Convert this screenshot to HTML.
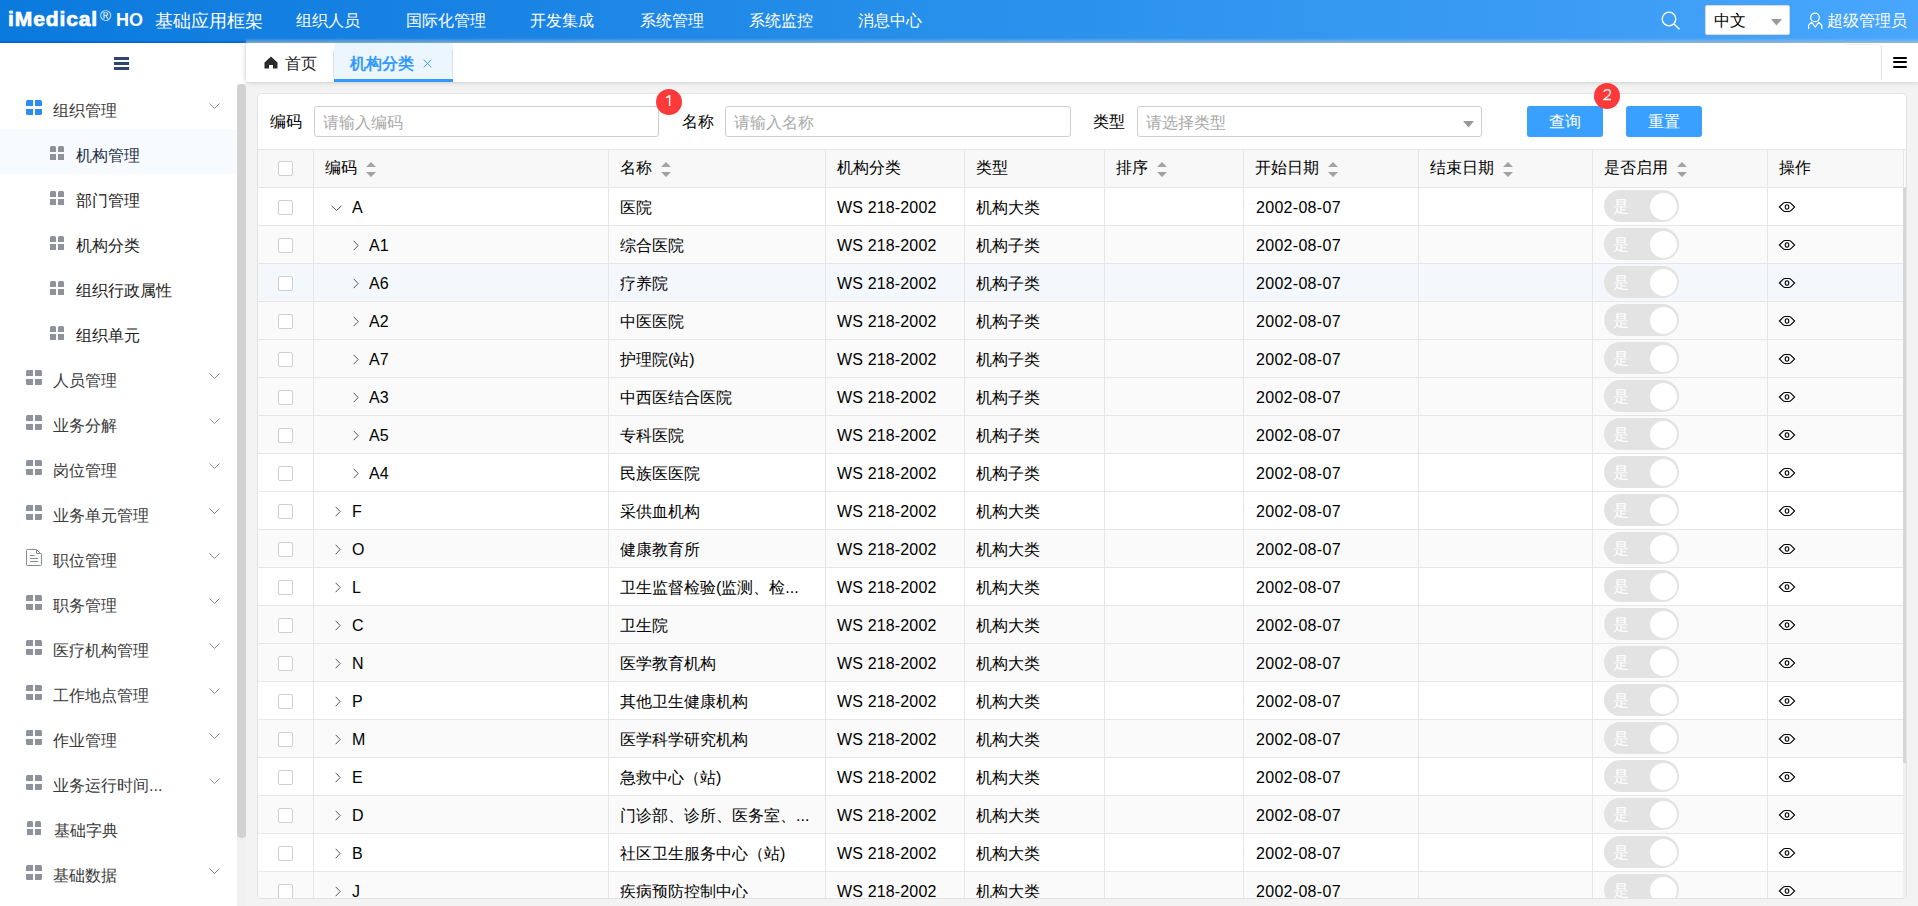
<!DOCTYPE html><html><head><meta charset="utf-8"><style>
*{box-sizing:border-box;margin:0;padding:0}
html,body{width:1918px;height:906px;overflow:hidden}
body{font-family:"Liberation Sans",sans-serif;font-size:16px;color:#000;background:#f3f3f3;position:relative}
.abs{position:absolute}
#hdr{left:0;top:0;width:1918px;height:43px;background:linear-gradient(90deg,#0b7add 0%,#1983e5 25%,#2790ea 49.5%,#3c9cf5 82%,#48a7fd 100%);z-index:5}
#hdr:before{content:'';position:absolute;left:246px;right:0;bottom:0;height:5px;background:linear-gradient(180deg,rgba(225,225,225,0),rgba(225,225,225,.42))}
#hdr:after{content:'';position:absolute;left:0;width:246px;bottom:0;height:2px;background:rgba(0,70,190,.35)}
#hdr .t{position:absolute;color:#fff;white-space:nowrap;line-height:20px}
#side{left:0;top:43px;width:246px;height:863px;background:#fff;z-index:3}
.mi{position:absolute;left:0;width:237px;height:45px}
.mi .tx{position:absolute;top:0;line-height:45px;color:#3a3a3a;white-space:nowrap;padding-top:4px}
.ic4{position:absolute;width:16px;height:15px}
.ic4 i{position:absolute;width:7px;height:6px;border-radius:2px;background:#8a8e99}
.chev{position:absolute;left:209px;width:10px;height:6px}
#tabs{left:246px;top:43px;width:1672px;height:39px;background:#fff;z-index:6;box-shadow:0 0 5px rgba(170,170,170,.7);border-top-left-radius:3px}
#card{left:257px;top:93px;width:1650px;height:806px;background:#fff;border:1px solid #e3e3e3;border-radius:4px;overflow:hidden}
.lbl{position:absolute;line-height:20px;white-space:nowrap;color:#000}
.inp{position:absolute;height:31px;border:1px solid #cfcfcf;border-radius:3px;background:#fff}
.inp span{position:absolute;left:8px;top:6px;line-height:20px;color:#a9a9a9;white-space:nowrap}
.btn{position:absolute;height:31px;width:76px;background:#3aa0ff;border-radius:3px;color:#fff;text-align:center;line-height:31px}
.badge{position:absolute;width:26px;height:26px;border-radius:13px;background:#fc3a3a;color:#fff;font-size:15px;text-align:center;line-height:26px}
.row{position:absolute;left:0;width:1645px;height:38px;border-bottom:1px solid #e6e6e6;overflow:hidden}
.cell{position:absolute;top:1px;height:36px;line-height:37px;white-space:nowrap;overflow:hidden}
.vl{position:absolute;width:1px;background:#e6e6e6}
.cb{position:absolute;left:20px;top:11px;width:15px;height:15px;border:1px solid #cfcfcf;border-radius:2px;background:#fff}
.sw{position:absolute;width:75px;height:32px;border-radius:16px;background:#e3e3e3}
.sw b{position:absolute;right:2px;top:2.5px;width:27px;height:27px;border-radius:14px;background:#fff}
.sw span{position:absolute;left:9px;top:1px;line-height:32px;color:#fff;font-size:16px}
.sort{position:absolute;width:10px;height:15px}
</style></head><body><div id="hdr" class="abs"><div class="t" style="left:8px;top:9px;font-size:21px;font-weight:bold;letter-spacing:0.9px;-webkit-text-stroke:0.7px #fff">iMedical</div><div class="t" style="left:100px;top:6px;font-size:15px">&#174;</div><div class="t" style="left:116px;top:10px;font-size:18px;font-weight:bold">HO</div><div class="t" style="left:155px;top:11px;font-size:18px">基础应用框架</div><div class="t" style="left:296px;top:11px;font-size:16px">组织人员</div><div class="t" style="left:406px;top:11px;font-size:16px">国际化管理</div><div class="t" style="left:530px;top:11px;font-size:16px">开发集成</div><div class="t" style="left:640px;top:11px;font-size:16px">系统管理</div><div class="t" style="left:749px;top:11px;font-size:16px">系统监控</div><div class="t" style="left:858px;top:11px;font-size:16px">消息中心</div><svg class="abs" style="left:1661px;top:11px" width="20" height="19" viewBox="0 0 20 19"><circle cx="8" cy="8" r="6.8" fill="none" stroke="#fff" stroke-width="1.3"/><path d="M13 13 L18.5 18.2" stroke="#fff" stroke-width="1.4"/></svg><div class="abs" style="left:1705px;top:5px;width:85px;height:30px;background:#fff;border-radius:2px;border:1px solid #d9d9d9"><span style="position:absolute;left:8px;top:5px;line-height:20px;color:#000">中文</span><svg style="position:absolute;left:65px;top:13px" width="11" height="7" viewBox="0 0 11 7"><path d="M0 0 L11 0 L5.5 6.5 Z" fill="#999"/></svg></div><svg class="abs" style="left:1807px;top:12px" width="17" height="18" viewBox="0 0 17 18"><circle cx="8" cy="5.4" r="4.3" fill="none" stroke="#fff" stroke-width="1.2"/><path d="M1.6 17 V13.2 L4.6 10.2 L8.4 15 L11.6 10.2 L14.8 13.2 V17" fill="none" stroke="#fff" stroke-width="1.2"/></svg><div class="t" style="left:1827px;top:11px;font-size:16px">超级管理员</div></div><div id="side" class="abs"><div class="abs" style="left:114px;top:14px;width:15px;height:3px;background:#2f4570"></div><div class="abs" style="left:114px;top:19px;width:15px;height:3px;background:#2f4570"></div><div class="abs" style="left:114px;top:24px;width:15px;height:3px;background:#2f4570"></div><div class="abs" style="left:237px;top:41px;width:9px;height:822px;background:#f1f1f1"></div><div class="abs" style="left:237px;top:41px;width:9px;height:754px;background:#d2d2d2;border-radius:4px"></div><div class="mi" style="top:41px;"><div class="ic4" style="left:26px;top:16px;width:16px;height:15px"><i style="left:0px;top:0px;width:7px;height:6px;background:#2d8cf0;border-radius:1.5px 0 0 0"></i><i style="left:9px;top:0px;width:7px;height:6px;background:#2d8cf0;border-radius:0 1.5px 0 0"></i><i style="left:0px;top:9px;width:7px;height:6px;background:#2d8cf0;border-radius:0 0 0 1.5px"></i><i style="left:9px;top:9px;width:7px;height:6px;background:#2d8cf0;border-radius:0 0 1.5px 0"></i></div><div class="tx" style="left:53px">组织管理</div><svg class="abs" style="left:208.5px;top:18.5px" width="11" height="7" viewBox="0 0 11 7"><path d="M0.5 0.5 L5.5 5.5 L10.5 0.5" fill="none" stroke="#8a8a8a" stroke-width="1"/></svg></div><div class="mi" style="top:86px;background:#f7fbfe;"><div class="ic4" style="left:50px;top:17px;width:14px;height:14px"><i style="left:0px;top:0px;width:6px;height:6px;background:#8e929b;border-radius:1.5px 1.5px 0 0"></i><i style="left:8px;top:0px;width:6px;height:6px;background:#8e929b;border-radius:1.5px 1.5px 0 0"></i><i style="left:0px;top:8px;width:6px;height:6px;background:#8e929b;border-radius:0"></i><i style="left:8px;top:8px;width:6px;height:6px;background:#8e929b;border-radius:0"></i></div><div class="tx" style="left:76px;color:#1c2b44">机构管理</div></div><div class="mi" style="top:131px;"><div class="ic4" style="left:50px;top:17px;width:14px;height:14px"><i style="left:0px;top:0px;width:6px;height:6px;background:#8e929b;border-radius:1.5px 1.5px 0 0"></i><i style="left:8px;top:0px;width:6px;height:6px;background:#8e929b;border-radius:1.5px 1.5px 0 0"></i><i style="left:0px;top:8px;width:6px;height:6px;background:#8e929b;border-radius:0"></i><i style="left:8px;top:8px;width:6px;height:6px;background:#8e929b;border-radius:0"></i></div><div class="tx" style="left:76px;color:#222">部门管理</div></div><div class="mi" style="top:176px;"><div class="ic4" style="left:50px;top:17px;width:14px;height:14px"><i style="left:0px;top:0px;width:6px;height:6px;background:#8e929b;border-radius:1.5px 1.5px 0 0"></i><i style="left:8px;top:0px;width:6px;height:6px;background:#8e929b;border-radius:1.5px 1.5px 0 0"></i><i style="left:0px;top:8px;width:6px;height:6px;background:#8e929b;border-radius:0"></i><i style="left:8px;top:8px;width:6px;height:6px;background:#8e929b;border-radius:0"></i></div><div class="tx" style="left:76px;color:#222">机构分类</div></div><div class="mi" style="top:221px;"><div class="ic4" style="left:50px;top:17px;width:14px;height:14px"><i style="left:0px;top:0px;width:6px;height:6px;background:#8e929b;border-radius:1.5px 1.5px 0 0"></i><i style="left:8px;top:0px;width:6px;height:6px;background:#8e929b;border-radius:1.5px 1.5px 0 0"></i><i style="left:0px;top:8px;width:6px;height:6px;background:#8e929b;border-radius:0"></i><i style="left:8px;top:8px;width:6px;height:6px;background:#8e929b;border-radius:0"></i></div><div class="tx" style="left:76px;color:#222">组织行政属性</div></div><div class="mi" style="top:266px;"><div class="ic4" style="left:50px;top:17px;width:14px;height:14px"><i style="left:0px;top:0px;width:6px;height:6px;background:#8e929b;border-radius:1.5px 1.5px 0 0"></i><i style="left:8px;top:0px;width:6px;height:6px;background:#8e929b;border-radius:1.5px 1.5px 0 0"></i><i style="left:0px;top:8px;width:6px;height:6px;background:#8e929b;border-radius:0"></i><i style="left:8px;top:8px;width:6px;height:6px;background:#8e929b;border-radius:0"></i></div><div class="tx" style="left:76px;color:#222">组织单元</div></div><div class="mi" style="top:311px;"><div class="ic4" style="left:26px;top:16px;width:16px;height:15px"><i style="left:0px;top:0px;width:7px;height:6px;background:#8e929b;border-radius:1.5px 0 0 0"></i><i style="left:9px;top:0px;width:7px;height:6px;background:#8e929b;border-radius:0 1.5px 0 0"></i><i style="left:0px;top:9px;width:7px;height:6px;background:#8e929b;border-radius:0 0 0 1.5px"></i><i style="left:9px;top:9px;width:7px;height:6px;background:#8e929b;border-radius:0 0 1.5px 0"></i></div><div class="tx" style="left:53px">人员管理</div><svg class="abs" style="left:208.5px;top:18.5px" width="11" height="7" viewBox="0 0 11 7"><path d="M0.5 0.5 L5.5 5.5 L10.5 0.5" fill="none" stroke="#8a8a8a" stroke-width="1"/></svg></div><div class="mi" style="top:356px;"><div class="ic4" style="left:26px;top:16px;width:16px;height:15px"><i style="left:0px;top:0px;width:7px;height:6px;background:#8e929b;border-radius:1.5px 0 0 0"></i><i style="left:9px;top:0px;width:7px;height:6px;background:#8e929b;border-radius:0 1.5px 0 0"></i><i style="left:0px;top:9px;width:7px;height:6px;background:#8e929b;border-radius:0 0 0 1.5px"></i><i style="left:9px;top:9px;width:7px;height:6px;background:#8e929b;border-radius:0 0 1.5px 0"></i></div><div class="tx" style="left:53px">业务分解</div><svg class="abs" style="left:208.5px;top:18.5px" width="11" height="7" viewBox="0 0 11 7"><path d="M0.5 0.5 L5.5 5.5 L10.5 0.5" fill="none" stroke="#8a8a8a" stroke-width="1"/></svg></div><div class="mi" style="top:401px;"><div class="ic4" style="left:26px;top:16px;width:16px;height:15px"><i style="left:0px;top:0px;width:7px;height:6px;background:#8e929b;border-radius:1.5px 0 0 0"></i><i style="left:9px;top:0px;width:7px;height:6px;background:#8e929b;border-radius:0 1.5px 0 0"></i><i style="left:0px;top:9px;width:7px;height:6px;background:#8e929b;border-radius:0 0 0 1.5px"></i><i style="left:9px;top:9px;width:7px;height:6px;background:#8e929b;border-radius:0 0 1.5px 0"></i></div><div class="tx" style="left:53px">岗位管理</div><svg class="abs" style="left:208.5px;top:18.5px" width="11" height="7" viewBox="0 0 11 7"><path d="M0.5 0.5 L5.5 5.5 L10.5 0.5" fill="none" stroke="#8a8a8a" stroke-width="1"/></svg></div><div class="mi" style="top:446px;"><div class="ic4" style="left:26px;top:16px;width:16px;height:15px"><i style="left:0px;top:0px;width:7px;height:6px;background:#8e929b;border-radius:1.5px 0 0 0"></i><i style="left:9px;top:0px;width:7px;height:6px;background:#8e929b;border-radius:0 1.5px 0 0"></i><i style="left:0px;top:9px;width:7px;height:6px;background:#8e929b;border-radius:0 0 0 1.5px"></i><i style="left:9px;top:9px;width:7px;height:6px;background:#8e929b;border-radius:0 0 1.5px 0"></i></div><div class="tx" style="left:53px">业务单元管理</div><svg class="abs" style="left:208.5px;top:18.5px" width="11" height="7" viewBox="0 0 11 7"><path d="M0.5 0.5 L5.5 5.5 L10.5 0.5" fill="none" stroke="#8a8a8a" stroke-width="1"/></svg></div><div class="mi" style="top:491px;"><svg class="abs" style="left:26px;top:15px" width="17" height="18" viewBox="0 0 17 18"><path d="M0.5 1.5 Q0.5 0.5 1.5 0.5 H10.5 L15.5 5.5 V15.5 Q15.5 16.5 14.5 16.5 H1.5 Q0.5 16.5 0.5 15.5 Z M10.5 0.5 V4.5 H15.5 M4 6.5 H8.5 M4 9.5 H12 M4 12.5 H12" fill="none" stroke="#868a92" stroke-width="1"/></svg><div class="tx" style="left:53px">职位管理</div><svg class="abs" style="left:208.5px;top:18.5px" width="11" height="7" viewBox="0 0 11 7"><path d="M0.5 0.5 L5.5 5.5 L10.5 0.5" fill="none" stroke="#8a8a8a" stroke-width="1"/></svg></div><div class="mi" style="top:536px;"><div class="ic4" style="left:26px;top:16px;width:16px;height:15px"><i style="left:0px;top:0px;width:7px;height:6px;background:#8e929b;border-radius:1.5px 0 0 0"></i><i style="left:9px;top:0px;width:7px;height:6px;background:#8e929b;border-radius:0 1.5px 0 0"></i><i style="left:0px;top:9px;width:7px;height:6px;background:#8e929b;border-radius:0 0 0 1.5px"></i><i style="left:9px;top:9px;width:7px;height:6px;background:#8e929b;border-radius:0 0 1.5px 0"></i></div><div class="tx" style="left:53px">职务管理</div><svg class="abs" style="left:208.5px;top:18.5px" width="11" height="7" viewBox="0 0 11 7"><path d="M0.5 0.5 L5.5 5.5 L10.5 0.5" fill="none" stroke="#8a8a8a" stroke-width="1"/></svg></div><div class="mi" style="top:581px;"><div class="ic4" style="left:26px;top:16px;width:16px;height:15px"><i style="left:0px;top:0px;width:7px;height:6px;background:#8e929b;border-radius:1.5px 0 0 0"></i><i style="left:9px;top:0px;width:7px;height:6px;background:#8e929b;border-radius:0 1.5px 0 0"></i><i style="left:0px;top:9px;width:7px;height:6px;background:#8e929b;border-radius:0 0 0 1.5px"></i><i style="left:9px;top:9px;width:7px;height:6px;background:#8e929b;border-radius:0 0 1.5px 0"></i></div><div class="tx" style="left:53px">医疗机构管理</div><svg class="abs" style="left:208.5px;top:18.5px" width="11" height="7" viewBox="0 0 11 7"><path d="M0.5 0.5 L5.5 5.5 L10.5 0.5" fill="none" stroke="#8a8a8a" stroke-width="1"/></svg></div><div class="mi" style="top:626px;"><div class="ic4" style="left:26px;top:16px;width:16px;height:15px"><i style="left:0px;top:0px;width:7px;height:6px;background:#8e929b;border-radius:1.5px 0 0 0"></i><i style="left:9px;top:0px;width:7px;height:6px;background:#8e929b;border-radius:0 1.5px 0 0"></i><i style="left:0px;top:9px;width:7px;height:6px;background:#8e929b;border-radius:0 0 0 1.5px"></i><i style="left:9px;top:9px;width:7px;height:6px;background:#8e929b;border-radius:0 0 1.5px 0"></i></div><div class="tx" style="left:53px">工作地点管理</div><svg class="abs" style="left:208.5px;top:18.5px" width="11" height="7" viewBox="0 0 11 7"><path d="M0.5 0.5 L5.5 5.5 L10.5 0.5" fill="none" stroke="#8a8a8a" stroke-width="1"/></svg></div><div class="mi" style="top:671px;"><div class="ic4" style="left:26px;top:16px;width:16px;height:15px"><i style="left:0px;top:0px;width:7px;height:6px;background:#8e929b;border-radius:1.5px 0 0 0"></i><i style="left:9px;top:0px;width:7px;height:6px;background:#8e929b;border-radius:0 1.5px 0 0"></i><i style="left:0px;top:9px;width:7px;height:6px;background:#8e929b;border-radius:0 0 0 1.5px"></i><i style="left:9px;top:9px;width:7px;height:6px;background:#8e929b;border-radius:0 0 1.5px 0"></i></div><div class="tx" style="left:53px">作业管理</div><svg class="abs" style="left:208.5px;top:18.5px" width="11" height="7" viewBox="0 0 11 7"><path d="M0.5 0.5 L5.5 5.5 L10.5 0.5" fill="none" stroke="#8a8a8a" stroke-width="1"/></svg></div><div class="mi" style="top:716px;"><div class="ic4" style="left:26px;top:16px;width:16px;height:15px"><i style="left:0px;top:0px;width:7px;height:6px;background:#8e929b;border-radius:1.5px 0 0 0"></i><i style="left:9px;top:0px;width:7px;height:6px;background:#8e929b;border-radius:0 1.5px 0 0"></i><i style="left:0px;top:9px;width:7px;height:6px;background:#8e929b;border-radius:0 0 0 1.5px"></i><i style="left:9px;top:9px;width:7px;height:6px;background:#8e929b;border-radius:0 0 1.5px 0"></i></div><div class="tx" style="left:53px">业务运行时间...</div><svg class="abs" style="left:208.5px;top:18.5px" width="11" height="7" viewBox="0 0 11 7"><path d="M0.5 0.5 L5.5 5.5 L10.5 0.5" fill="none" stroke="#8a8a8a" stroke-width="1"/></svg></div><div class="mi" style="top:761px;"><div class="ic4" style="left:27px;top:17px;width:14px;height:14px"><i style="left:0px;top:0px;width:6px;height:6px;background:#8e929b;border-radius:1.5px 1.5px 0 0"></i><i style="left:8px;top:0px;width:6px;height:6px;background:#8e929b;border-radius:1.5px 1.5px 0 0"></i><i style="left:0px;top:8px;width:6px;height:6px;background:#8e929b;border-radius:0"></i><i style="left:8px;top:8px;width:6px;height:6px;background:#8e929b;border-radius:0"></i></div><div class="tx" style="left:54px">基础字典</div></div><div class="mi" style="top:806px;"><div class="ic4" style="left:26px;top:16px;width:16px;height:15px"><i style="left:0px;top:0px;width:7px;height:6px;background:#8e929b;border-radius:1.5px 0 0 0"></i><i style="left:9px;top:0px;width:7px;height:6px;background:#8e929b;border-radius:0 1.5px 0 0"></i><i style="left:0px;top:9px;width:7px;height:6px;background:#8e929b;border-radius:0 0 0 1.5px"></i><i style="left:9px;top:9px;width:7px;height:6px;background:#8e929b;border-radius:0 0 1.5px 0"></i></div><div class="tx" style="left:53px">基础数据</div><svg class="abs" style="left:208.5px;top:18.5px" width="11" height="7" viewBox="0 0 11 7"><path d="M0.5 0.5 L5.5 5.5 L10.5 0.5" fill="none" stroke="#8a8a8a" stroke-width="1"/></svg></div></div><div id="tabs" class="abs"><svg class="abs" style="left:18px;top:13px" width="14" height="13" viewBox="0 0 14 13"><path d="M7 0.5 L13.5 6.5 V12.5 H9 V9 H5 V12.5 H0.5 V6.5 Z" fill="#2b2b2b"/></svg><div class="abs" style="left:39px;top:10.5px;line-height:20px;color:#222">首页</div><div class="abs" style="left:87px;top:7px;width:1px;height:27px;background:#e0e0e0"></div><div class="abs" style="left:88px;top:0;width:119px;height:39px;background:#ebf6ff;border-bottom:3px solid #3399ff"></div><div class="abs" style="left:104px;top:10.5px;line-height:20px;color:#3399ff;font-weight:bold">机构分类</div><svg class="abs" style="left:177px;top:16px" width="9" height="9" viewBox="0 0 9 9"><path d="M0.7 0.7 L8.3 8.3 M8.3 0.7 L0.7 8.3" stroke="#3399ff" stroke-width="0.95"/></svg><div class="abs" style="left:206px;top:7px;width:1px;height:27px;background:#e0e0e0"></div><div class="abs" style="left:1600px;top:1px;width:36px;height:36px;border-right:1px solid #e3e3e3;border-top:1px solid #f1eeeb;border-top-right-radius:4px"></div><div class="abs" style="left:1647px;top:14px;width:14px;height:2.4px;background:#000;border-radius:1px"></div><div class="abs" style="left:1647px;top:18px;width:14px;height:2.4px;background:#000;border-radius:1px"></div><div class="abs" style="left:1647px;top:23px;width:14px;height:2.4px;background:#000;border-radius:1px"></div></div><div id="card" class="abs"><div class="lbl" style="left:12px;top:18px">编码</div><div class="inp" style="left:56px;top:12px;width:345px"><span>请输入编码</span></div><div class="lbl" style="left:424px;top:18px">名称</div><div class="inp" style="left:467px;top:12px;width:346px"><span>请输入名称</span></div><div class="lbl" style="left:835px;top:18px">类型</div><div class="inp" style="left:879px;top:12px;width:345px"><span>请选择类型</span><svg style="position:absolute;left:325px;top:14px" width="11" height="7" viewBox="0 0 11 7"><path d="M0 0 L11 0 L5.5 6.5 Z" fill="#999"/></svg></div><div class="btn" style="left:1269px;top:12px">查询</div><div class="btn" style="left:1368px;top:12px">重置</div><div class="abs" style="left:0;top:55px;width:1648px;height:1px;background:#e6e6e6"></div><div class="abs" style="left:0;top:56px;width:1648px;height:38px;background:#f8f8f8;border-bottom:1px solid #e6e6e6"></div><div class="lbl" style="left:67px;top:64px">编码</div><svg class="abs" style="left:108px;top:68px" width="10" height="15" viewBox="0 0 10 15"><path d="M0 5 L5 0 L10 5 Z M0 10 L10 10 L5 15 Z" fill="#a3a3a3"/></svg><div class="lbl" style="left:362px;top:64px">名称</div><svg class="abs" style="left:403px;top:68px" width="10" height="15" viewBox="0 0 10 15"><path d="M0 5 L5 0 L10 5 Z M0 10 L10 10 L5 15 Z" fill="#a3a3a3"/></svg><div class="lbl" style="left:579px;top:64px">机构分类</div><div class="lbl" style="left:718px;top:64px">类型</div><div class="lbl" style="left:858px;top:64px">排序</div><svg class="abs" style="left:899px;top:68px" width="10" height="15" viewBox="0 0 10 15"><path d="M0 5 L5 0 L10 5 Z M0 10 L10 10 L5 15 Z" fill="#a3a3a3"/></svg><div class="lbl" style="left:997px;top:64px">开始日期</div><svg class="abs" style="left:1070px;top:68px" width="10" height="15" viewBox="0 0 10 15"><path d="M0 5 L5 0 L10 5 Z M0 10 L10 10 L5 15 Z" fill="#a3a3a3"/></svg><div class="lbl" style="left:1172px;top:64px">结束日期</div><svg class="abs" style="left:1245px;top:68px" width="10" height="15" viewBox="0 0 10 15"><path d="M0 5 L5 0 L10 5 Z M0 10 L10 10 L5 15 Z" fill="#a3a3a3"/></svg><div class="lbl" style="left:1346px;top:64px">是否启用</div><svg class="abs" style="left:1419px;top:68px" width="10" height="15" viewBox="0 0 10 15"><path d="M0 5 L5 0 L10 5 Z M0 10 L10 10 L5 15 Z" fill="#a3a3a3"/></svg><div class="lbl" style="left:1521px;top:64px">操作</div><div class="cb" style="left:20px;top:67px"></div><div class="row" style="top:94px;background:#fff"><div class="cb" style="left:20px;top:12px"></div><svg class="abs" style="left:73px;top:17px" width="11" height="7" viewBox="0 0 11 7"><path d="M0.5 0.8 L5.5 5.5 L10.5 0.8" fill="none" stroke="#555" stroke-width="1"/></svg><div class="cell" style="left:94px">A</div><div class="cell" style="left:362px">医院</div><div class="cell" style="left:579px;letter-spacing:0.15px">WS 218-2002</div><div class="cell" style="left:718px">机构大类</div><div class="cell" style="left:998px;letter-spacing:0.3px">2002-08-07</div><div class="sw" style="left:1346px;top:2px"><span>是</span><b></b></div><svg class="abs" style="left:1520px;top:13px" width="18" height="12" viewBox="0 0 18 12"><path d="M1.4 6 L4.8 2.6 Q5.9 1.5 7.4 1.5 H10.6 Q12.1 1.5 13.2 2.6 L16.6 6 L13.2 9.4 Q12.1 10.5 10.6 10.5 H7.4 Q5.9 10.5 4.8 9.4 Z" fill="none" stroke="#000" stroke-width="1.1"/><ellipse cx="9" cy="6" rx="1.8" ry="2.2" fill="none" stroke="#000" stroke-width="1.05"/></svg></div><div class="row" style="top:132px;background:#fafafa"><div class="cb" style="left:20px;top:12px"></div><svg class="abs" style="left:95px;top:14px" width="7" height="11" viewBox="0 0 7 11"><path d="M0.6 0.8 L5.2 5.5 L0.6 10.2" fill="none" stroke="#555" stroke-width="1"/></svg><div class="cell" style="left:111px">A1</div><div class="cell" style="left:362px">综合医院</div><div class="cell" style="left:579px;letter-spacing:0.15px">WS 218-2002</div><div class="cell" style="left:718px">机构子类</div><div class="cell" style="left:998px;letter-spacing:0.3px">2002-08-07</div><div class="sw" style="left:1346px;top:2px"><span>是</span><b></b></div><svg class="abs" style="left:1520px;top:13px" width="18" height="12" viewBox="0 0 18 12"><path d="M1.4 6 L4.8 2.6 Q5.9 1.5 7.4 1.5 H10.6 Q12.1 1.5 13.2 2.6 L16.6 6 L13.2 9.4 Q12.1 10.5 10.6 10.5 H7.4 Q5.9 10.5 4.8 9.4 Z" fill="none" stroke="#000" stroke-width="1.1"/><ellipse cx="9" cy="6" rx="1.8" ry="2.2" fill="none" stroke="#000" stroke-width="1.05"/></svg></div><div class="row" style="top:170px;background:#f4f8fc"><div class="cb" style="left:20px;top:12px"></div><svg class="abs" style="left:95px;top:14px" width="7" height="11" viewBox="0 0 7 11"><path d="M0.6 0.8 L5.2 5.5 L0.6 10.2" fill="none" stroke="#555" stroke-width="1"/></svg><div class="cell" style="left:111px">A6</div><div class="cell" style="left:362px">疗养院</div><div class="cell" style="left:579px;letter-spacing:0.15px">WS 218-2002</div><div class="cell" style="left:718px">机构子类</div><div class="cell" style="left:998px;letter-spacing:0.3px">2002-08-07</div><div class="sw" style="left:1346px;top:2px"><span>是</span><b></b></div><svg class="abs" style="left:1520px;top:13px" width="18" height="12" viewBox="0 0 18 12"><path d="M1.4 6 L4.8 2.6 Q5.9 1.5 7.4 1.5 H10.6 Q12.1 1.5 13.2 2.6 L16.6 6 L13.2 9.4 Q12.1 10.5 10.6 10.5 H7.4 Q5.9 10.5 4.8 9.4 Z" fill="none" stroke="#000" stroke-width="1.1"/><ellipse cx="9" cy="6" rx="1.8" ry="2.2" fill="none" stroke="#000" stroke-width="1.05"/></svg></div><div class="row" style="top:208px;background:#fafafa"><div class="cb" style="left:20px;top:12px"></div><svg class="abs" style="left:95px;top:14px" width="7" height="11" viewBox="0 0 7 11"><path d="M0.6 0.8 L5.2 5.5 L0.6 10.2" fill="none" stroke="#555" stroke-width="1"/></svg><div class="cell" style="left:111px">A2</div><div class="cell" style="left:362px">中医医院</div><div class="cell" style="left:579px;letter-spacing:0.15px">WS 218-2002</div><div class="cell" style="left:718px">机构子类</div><div class="cell" style="left:998px;letter-spacing:0.3px">2002-08-07</div><div class="sw" style="left:1346px;top:2px"><span>是</span><b></b></div><svg class="abs" style="left:1520px;top:13px" width="18" height="12" viewBox="0 0 18 12"><path d="M1.4 6 L4.8 2.6 Q5.9 1.5 7.4 1.5 H10.6 Q12.1 1.5 13.2 2.6 L16.6 6 L13.2 9.4 Q12.1 10.5 10.6 10.5 H7.4 Q5.9 10.5 4.8 9.4 Z" fill="none" stroke="#000" stroke-width="1.1"/><ellipse cx="9" cy="6" rx="1.8" ry="2.2" fill="none" stroke="#000" stroke-width="1.05"/></svg></div><div class="row" style="top:246px;background:#fafafa"><div class="cb" style="left:20px;top:12px"></div><svg class="abs" style="left:95px;top:14px" width="7" height="11" viewBox="0 0 7 11"><path d="M0.6 0.8 L5.2 5.5 L0.6 10.2" fill="none" stroke="#555" stroke-width="1"/></svg><div class="cell" style="left:111px">A7</div><div class="cell" style="left:362px">护理院(站)</div><div class="cell" style="left:579px;letter-spacing:0.15px">WS 218-2002</div><div class="cell" style="left:718px">机构子类</div><div class="cell" style="left:998px;letter-spacing:0.3px">2002-08-07</div><div class="sw" style="left:1346px;top:2px"><span>是</span><b></b></div><svg class="abs" style="left:1520px;top:13px" width="18" height="12" viewBox="0 0 18 12"><path d="M1.4 6 L4.8 2.6 Q5.9 1.5 7.4 1.5 H10.6 Q12.1 1.5 13.2 2.6 L16.6 6 L13.2 9.4 Q12.1 10.5 10.6 10.5 H7.4 Q5.9 10.5 4.8 9.4 Z" fill="none" stroke="#000" stroke-width="1.1"/><ellipse cx="9" cy="6" rx="1.8" ry="2.2" fill="none" stroke="#000" stroke-width="1.05"/></svg></div><div class="row" style="top:284px;background:#fafafa"><div class="cb" style="left:20px;top:12px"></div><svg class="abs" style="left:95px;top:14px" width="7" height="11" viewBox="0 0 7 11"><path d="M0.6 0.8 L5.2 5.5 L0.6 10.2" fill="none" stroke="#555" stroke-width="1"/></svg><div class="cell" style="left:111px">A3</div><div class="cell" style="left:362px">中西医结合医院</div><div class="cell" style="left:579px;letter-spacing:0.15px">WS 218-2002</div><div class="cell" style="left:718px">机构子类</div><div class="cell" style="left:998px;letter-spacing:0.3px">2002-08-07</div><div class="sw" style="left:1346px;top:2px"><span>是</span><b></b></div><svg class="abs" style="left:1520px;top:13px" width="18" height="12" viewBox="0 0 18 12"><path d="M1.4 6 L4.8 2.6 Q5.9 1.5 7.4 1.5 H10.6 Q12.1 1.5 13.2 2.6 L16.6 6 L13.2 9.4 Q12.1 10.5 10.6 10.5 H7.4 Q5.9 10.5 4.8 9.4 Z" fill="none" stroke="#000" stroke-width="1.1"/><ellipse cx="9" cy="6" rx="1.8" ry="2.2" fill="none" stroke="#000" stroke-width="1.05"/></svg></div><div class="row" style="top:322px;background:#fafafa"><div class="cb" style="left:20px;top:12px"></div><svg class="abs" style="left:95px;top:14px" width="7" height="11" viewBox="0 0 7 11"><path d="M0.6 0.8 L5.2 5.5 L0.6 10.2" fill="none" stroke="#555" stroke-width="1"/></svg><div class="cell" style="left:111px">A5</div><div class="cell" style="left:362px">专科医院</div><div class="cell" style="left:579px;letter-spacing:0.15px">WS 218-2002</div><div class="cell" style="left:718px">机构子类</div><div class="cell" style="left:998px;letter-spacing:0.3px">2002-08-07</div><div class="sw" style="left:1346px;top:2px"><span>是</span><b></b></div><svg class="abs" style="left:1520px;top:13px" width="18" height="12" viewBox="0 0 18 12"><path d="M1.4 6 L4.8 2.6 Q5.9 1.5 7.4 1.5 H10.6 Q12.1 1.5 13.2 2.6 L16.6 6 L13.2 9.4 Q12.1 10.5 10.6 10.5 H7.4 Q5.9 10.5 4.8 9.4 Z" fill="none" stroke="#000" stroke-width="1.1"/><ellipse cx="9" cy="6" rx="1.8" ry="2.2" fill="none" stroke="#000" stroke-width="1.05"/></svg></div><div class="row" style="top:360px;background:#fff"><div class="cb" style="left:20px;top:12px"></div><svg class="abs" style="left:95px;top:14px" width="7" height="11" viewBox="0 0 7 11"><path d="M0.6 0.8 L5.2 5.5 L0.6 10.2" fill="none" stroke="#555" stroke-width="1"/></svg><div class="cell" style="left:111px">A4</div><div class="cell" style="left:362px">民族医医院</div><div class="cell" style="left:579px;letter-spacing:0.15px">WS 218-2002</div><div class="cell" style="left:718px">机构子类</div><div class="cell" style="left:998px;letter-spacing:0.3px">2002-08-07</div><div class="sw" style="left:1346px;top:2px"><span>是</span><b></b></div><svg class="abs" style="left:1520px;top:13px" width="18" height="12" viewBox="0 0 18 12"><path d="M1.4 6 L4.8 2.6 Q5.9 1.5 7.4 1.5 H10.6 Q12.1 1.5 13.2 2.6 L16.6 6 L13.2 9.4 Q12.1 10.5 10.6 10.5 H7.4 Q5.9 10.5 4.8 9.4 Z" fill="none" stroke="#000" stroke-width="1.1"/><ellipse cx="9" cy="6" rx="1.8" ry="2.2" fill="none" stroke="#000" stroke-width="1.05"/></svg></div><div class="row" style="top:398px;background:#fff"><div class="cb" style="left:20px;top:12px"></div><svg class="abs" style="left:77px;top:14px" width="7" height="11" viewBox="0 0 7 11"><path d="M0.6 0.8 L5.2 5.5 L0.6 10.2" fill="none" stroke="#555" stroke-width="1"/></svg><div class="cell" style="left:94px">F</div><div class="cell" style="left:362px">采供血机构</div><div class="cell" style="left:579px;letter-spacing:0.15px">WS 218-2002</div><div class="cell" style="left:718px">机构大类</div><div class="cell" style="left:998px;letter-spacing:0.3px">2002-08-07</div><div class="sw" style="left:1346px;top:2px"><span>是</span><b></b></div><svg class="abs" style="left:1520px;top:13px" width="18" height="12" viewBox="0 0 18 12"><path d="M1.4 6 L4.8 2.6 Q5.9 1.5 7.4 1.5 H10.6 Q12.1 1.5 13.2 2.6 L16.6 6 L13.2 9.4 Q12.1 10.5 10.6 10.5 H7.4 Q5.9 10.5 4.8 9.4 Z" fill="none" stroke="#000" stroke-width="1.1"/><ellipse cx="9" cy="6" rx="1.8" ry="2.2" fill="none" stroke="#000" stroke-width="1.05"/></svg></div><div class="row" style="top:436px;background:#fafafa"><div class="cb" style="left:20px;top:12px"></div><svg class="abs" style="left:77px;top:14px" width="7" height="11" viewBox="0 0 7 11"><path d="M0.6 0.8 L5.2 5.5 L0.6 10.2" fill="none" stroke="#555" stroke-width="1"/></svg><div class="cell" style="left:94px">O</div><div class="cell" style="left:362px">健康教育所</div><div class="cell" style="left:579px;letter-spacing:0.15px">WS 218-2002</div><div class="cell" style="left:718px">机构大类</div><div class="cell" style="left:998px;letter-spacing:0.3px">2002-08-07</div><div class="sw" style="left:1346px;top:2px"><span>是</span><b></b></div><svg class="abs" style="left:1520px;top:13px" width="18" height="12" viewBox="0 0 18 12"><path d="M1.4 6 L4.8 2.6 Q5.9 1.5 7.4 1.5 H10.6 Q12.1 1.5 13.2 2.6 L16.6 6 L13.2 9.4 Q12.1 10.5 10.6 10.5 H7.4 Q5.9 10.5 4.8 9.4 Z" fill="none" stroke="#000" stroke-width="1.1"/><ellipse cx="9" cy="6" rx="1.8" ry="2.2" fill="none" stroke="#000" stroke-width="1.05"/></svg></div><div class="row" style="top:474px;background:#fff"><div class="cb" style="left:20px;top:12px"></div><svg class="abs" style="left:77px;top:14px" width="7" height="11" viewBox="0 0 7 11"><path d="M0.6 0.8 L5.2 5.5 L0.6 10.2" fill="none" stroke="#555" stroke-width="1"/></svg><div class="cell" style="left:94px">L</div><div class="cell" style="left:362px">卫生监督检验(监测、检...</div><div class="cell" style="left:579px;letter-spacing:0.15px">WS 218-2002</div><div class="cell" style="left:718px">机构大类</div><div class="cell" style="left:998px;letter-spacing:0.3px">2002-08-07</div><div class="sw" style="left:1346px;top:2px"><span>是</span><b></b></div><svg class="abs" style="left:1520px;top:13px" width="18" height="12" viewBox="0 0 18 12"><path d="M1.4 6 L4.8 2.6 Q5.9 1.5 7.4 1.5 H10.6 Q12.1 1.5 13.2 2.6 L16.6 6 L13.2 9.4 Q12.1 10.5 10.6 10.5 H7.4 Q5.9 10.5 4.8 9.4 Z" fill="none" stroke="#000" stroke-width="1.1"/><ellipse cx="9" cy="6" rx="1.8" ry="2.2" fill="none" stroke="#000" stroke-width="1.05"/></svg></div><div class="row" style="top:512px;background:#fafafa"><div class="cb" style="left:20px;top:12px"></div><svg class="abs" style="left:77px;top:14px" width="7" height="11" viewBox="0 0 7 11"><path d="M0.6 0.8 L5.2 5.5 L0.6 10.2" fill="none" stroke="#555" stroke-width="1"/></svg><div class="cell" style="left:94px">C</div><div class="cell" style="left:362px">卫生院</div><div class="cell" style="left:579px;letter-spacing:0.15px">WS 218-2002</div><div class="cell" style="left:718px">机构大类</div><div class="cell" style="left:998px;letter-spacing:0.3px">2002-08-07</div><div class="sw" style="left:1346px;top:2px"><span>是</span><b></b></div><svg class="abs" style="left:1520px;top:13px" width="18" height="12" viewBox="0 0 18 12"><path d="M1.4 6 L4.8 2.6 Q5.9 1.5 7.4 1.5 H10.6 Q12.1 1.5 13.2 2.6 L16.6 6 L13.2 9.4 Q12.1 10.5 10.6 10.5 H7.4 Q5.9 10.5 4.8 9.4 Z" fill="none" stroke="#000" stroke-width="1.1"/><ellipse cx="9" cy="6" rx="1.8" ry="2.2" fill="none" stroke="#000" stroke-width="1.05"/></svg></div><div class="row" style="top:550px;background:#fafafa"><div class="cb" style="left:20px;top:12px"></div><svg class="abs" style="left:77px;top:14px" width="7" height="11" viewBox="0 0 7 11"><path d="M0.6 0.8 L5.2 5.5 L0.6 10.2" fill="none" stroke="#555" stroke-width="1"/></svg><div class="cell" style="left:94px">N</div><div class="cell" style="left:362px">医学教育机构</div><div class="cell" style="left:579px;letter-spacing:0.15px">WS 218-2002</div><div class="cell" style="left:718px">机构大类</div><div class="cell" style="left:998px;letter-spacing:0.3px">2002-08-07</div><div class="sw" style="left:1346px;top:2px"><span>是</span><b></b></div><svg class="abs" style="left:1520px;top:13px" width="18" height="12" viewBox="0 0 18 12"><path d="M1.4 6 L4.8 2.6 Q5.9 1.5 7.4 1.5 H10.6 Q12.1 1.5 13.2 2.6 L16.6 6 L13.2 9.4 Q12.1 10.5 10.6 10.5 H7.4 Q5.9 10.5 4.8 9.4 Z" fill="none" stroke="#000" stroke-width="1.1"/><ellipse cx="9" cy="6" rx="1.8" ry="2.2" fill="none" stroke="#000" stroke-width="1.05"/></svg></div><div class="row" style="top:588px;background:#fff"><div class="cb" style="left:20px;top:12px"></div><svg class="abs" style="left:77px;top:14px" width="7" height="11" viewBox="0 0 7 11"><path d="M0.6 0.8 L5.2 5.5 L0.6 10.2" fill="none" stroke="#555" stroke-width="1"/></svg><div class="cell" style="left:94px">P</div><div class="cell" style="left:362px">其他卫生健康机构</div><div class="cell" style="left:579px;letter-spacing:0.15px">WS 218-2002</div><div class="cell" style="left:718px">机构大类</div><div class="cell" style="left:998px;letter-spacing:0.3px">2002-08-07</div><div class="sw" style="left:1346px;top:2px"><span>是</span><b></b></div><svg class="abs" style="left:1520px;top:13px" width="18" height="12" viewBox="0 0 18 12"><path d="M1.4 6 L4.8 2.6 Q5.9 1.5 7.4 1.5 H10.6 Q12.1 1.5 13.2 2.6 L16.6 6 L13.2 9.4 Q12.1 10.5 10.6 10.5 H7.4 Q5.9 10.5 4.8 9.4 Z" fill="none" stroke="#000" stroke-width="1.1"/><ellipse cx="9" cy="6" rx="1.8" ry="2.2" fill="none" stroke="#000" stroke-width="1.05"/></svg></div><div class="row" style="top:626px;background:#fafafa"><div class="cb" style="left:20px;top:12px"></div><svg class="abs" style="left:77px;top:14px" width="7" height="11" viewBox="0 0 7 11"><path d="M0.6 0.8 L5.2 5.5 L0.6 10.2" fill="none" stroke="#555" stroke-width="1"/></svg><div class="cell" style="left:94px">M</div><div class="cell" style="left:362px">医学科学研究机构</div><div class="cell" style="left:579px;letter-spacing:0.15px">WS 218-2002</div><div class="cell" style="left:718px">机构大类</div><div class="cell" style="left:998px;letter-spacing:0.3px">2002-08-07</div><div class="sw" style="left:1346px;top:2px"><span>是</span><b></b></div><svg class="abs" style="left:1520px;top:13px" width="18" height="12" viewBox="0 0 18 12"><path d="M1.4 6 L4.8 2.6 Q5.9 1.5 7.4 1.5 H10.6 Q12.1 1.5 13.2 2.6 L16.6 6 L13.2 9.4 Q12.1 10.5 10.6 10.5 H7.4 Q5.9 10.5 4.8 9.4 Z" fill="none" stroke="#000" stroke-width="1.1"/><ellipse cx="9" cy="6" rx="1.8" ry="2.2" fill="none" stroke="#000" stroke-width="1.05"/></svg></div><div class="row" style="top:664px;background:#fff"><div class="cb" style="left:20px;top:12px"></div><svg class="abs" style="left:77px;top:14px" width="7" height="11" viewBox="0 0 7 11"><path d="M0.6 0.8 L5.2 5.5 L0.6 10.2" fill="none" stroke="#555" stroke-width="1"/></svg><div class="cell" style="left:94px">E</div><div class="cell" style="left:362px">急救中心（站)</div><div class="cell" style="left:579px;letter-spacing:0.15px">WS 218-2002</div><div class="cell" style="left:718px">机构大类</div><div class="cell" style="left:998px;letter-spacing:0.3px">2002-08-07</div><div class="sw" style="left:1346px;top:2px"><span>是</span><b></b></div><svg class="abs" style="left:1520px;top:13px" width="18" height="12" viewBox="0 0 18 12"><path d="M1.4 6 L4.8 2.6 Q5.9 1.5 7.4 1.5 H10.6 Q12.1 1.5 13.2 2.6 L16.6 6 L13.2 9.4 Q12.1 10.5 10.6 10.5 H7.4 Q5.9 10.5 4.8 9.4 Z" fill="none" stroke="#000" stroke-width="1.1"/><ellipse cx="9" cy="6" rx="1.8" ry="2.2" fill="none" stroke="#000" stroke-width="1.05"/></svg></div><div class="row" style="top:702px;background:#fafafa"><div class="cb" style="left:20px;top:12px"></div><svg class="abs" style="left:77px;top:14px" width="7" height="11" viewBox="0 0 7 11"><path d="M0.6 0.8 L5.2 5.5 L0.6 10.2" fill="none" stroke="#555" stroke-width="1"/></svg><div class="cell" style="left:94px">D</div><div class="cell" style="left:362px">门诊部、诊所、医务室、...</div><div class="cell" style="left:579px;letter-spacing:0.15px">WS 218-2002</div><div class="cell" style="left:718px">机构大类</div><div class="cell" style="left:998px;letter-spacing:0.3px">2002-08-07</div><div class="sw" style="left:1346px;top:2px"><span>是</span><b></b></div><svg class="abs" style="left:1520px;top:13px" width="18" height="12" viewBox="0 0 18 12"><path d="M1.4 6 L4.8 2.6 Q5.9 1.5 7.4 1.5 H10.6 Q12.1 1.5 13.2 2.6 L16.6 6 L13.2 9.4 Q12.1 10.5 10.6 10.5 H7.4 Q5.9 10.5 4.8 9.4 Z" fill="none" stroke="#000" stroke-width="1.1"/><ellipse cx="9" cy="6" rx="1.8" ry="2.2" fill="none" stroke="#000" stroke-width="1.05"/></svg></div><div class="row" style="top:740px;background:#fff"><div class="cb" style="left:20px;top:12px"></div><svg class="abs" style="left:77px;top:14px" width="7" height="11" viewBox="0 0 7 11"><path d="M0.6 0.8 L5.2 5.5 L0.6 10.2" fill="none" stroke="#555" stroke-width="1"/></svg><div class="cell" style="left:94px">B</div><div class="cell" style="left:362px">社区卫生服务中心（站)</div><div class="cell" style="left:579px;letter-spacing:0.15px">WS 218-2002</div><div class="cell" style="left:718px">机构大类</div><div class="cell" style="left:998px;letter-spacing:0.3px">2002-08-07</div><div class="sw" style="left:1346px;top:2px"><span>是</span><b></b></div><svg class="abs" style="left:1520px;top:13px" width="18" height="12" viewBox="0 0 18 12"><path d="M1.4 6 L4.8 2.6 Q5.9 1.5 7.4 1.5 H10.6 Q12.1 1.5 13.2 2.6 L16.6 6 L13.2 9.4 Q12.1 10.5 10.6 10.5 H7.4 Q5.9 10.5 4.8 9.4 Z" fill="none" stroke="#000" stroke-width="1.1"/><ellipse cx="9" cy="6" rx="1.8" ry="2.2" fill="none" stroke="#000" stroke-width="1.05"/></svg></div><div class="row" style="top:778px;background:#fafafa"><div class="cb" style="left:20px;top:12px"></div><svg class="abs" style="left:77px;top:14px" width="7" height="11" viewBox="0 0 7 11"><path d="M0.6 0.8 L5.2 5.5 L0.6 10.2" fill="none" stroke="#555" stroke-width="1"/></svg><div class="cell" style="left:94px">J</div><div class="cell" style="left:362px">疾病预防控制中心</div><div class="cell" style="left:579px;letter-spacing:0.15px">WS 218-2002</div><div class="cell" style="left:718px">机构大类</div><div class="cell" style="left:998px;letter-spacing:0.3px">2002-08-07</div><div class="sw" style="left:1346px;top:2px"><span>是</span><b></b></div><svg class="abs" style="left:1520px;top:13px" width="18" height="12" viewBox="0 0 18 12"><path d="M1.4 6 L4.8 2.6 Q5.9 1.5 7.4 1.5 H10.6 Q12.1 1.5 13.2 2.6 L16.6 6 L13.2 9.4 Q12.1 10.5 10.6 10.5 H7.4 Q5.9 10.5 4.8 9.4 Z" fill="none" stroke="#000" stroke-width="1.1"/><ellipse cx="9" cy="6" rx="1.8" ry="2.2" fill="none" stroke="#000" stroke-width="1.05"/></svg></div><div class="vl" style="left:55px;top:56px;height:760px"></div><div class="vl" style="left:350px;top:56px;height:760px"></div><div class="vl" style="left:567px;top:56px;height:760px"></div><div class="vl" style="left:706px;top:56px;height:760px"></div><div class="vl" style="left:846px;top:56px;height:760px"></div><div class="vl" style="left:985px;top:56px;height:760px"></div><div class="vl" style="left:1160px;top:56px;height:760px"></div><div class="vl" style="left:1334px;top:56px;height:760px"></div><div class="vl" style="left:1509px;top:56px;height:760px"></div><div class="vl" style="left:1645px;top:56px;height:760px"></div><div class="abs" style="left:1645px;top:94px;width:3px;height:720px;background:#f0f0f0"></div><div class="abs" style="left:1645px;top:94px;width:3px;height:575px;background:#d6d6d6"></div></div><div class="badge" style="left:1594px;top:83px;z-index:6"><svg style="position:absolute;left:9px;top:6px" width="9" height="12" viewBox="0 0 9 12"><path d="M0.9 2.7 Q1.6 0.7 4.2 0.7 Q7.3 0.7 7.3 3.4 Q7.3 5.1 5.2 6.9 L1 10.5 H8" fill="none" stroke="#fff" stroke-width="1.3"/></svg></div><div class="badge" style="left:656px;top:89px;z-index:6"><svg style="position:absolute;left:9px;top:6px" width="8" height="12" viewBox="0 0 8 12"><path d="M1 2.6 Q3.2 1.9 4.6 0.4 V11" fill="none" stroke="#fff" stroke-width="1.4"/></svg></div></body></html>
